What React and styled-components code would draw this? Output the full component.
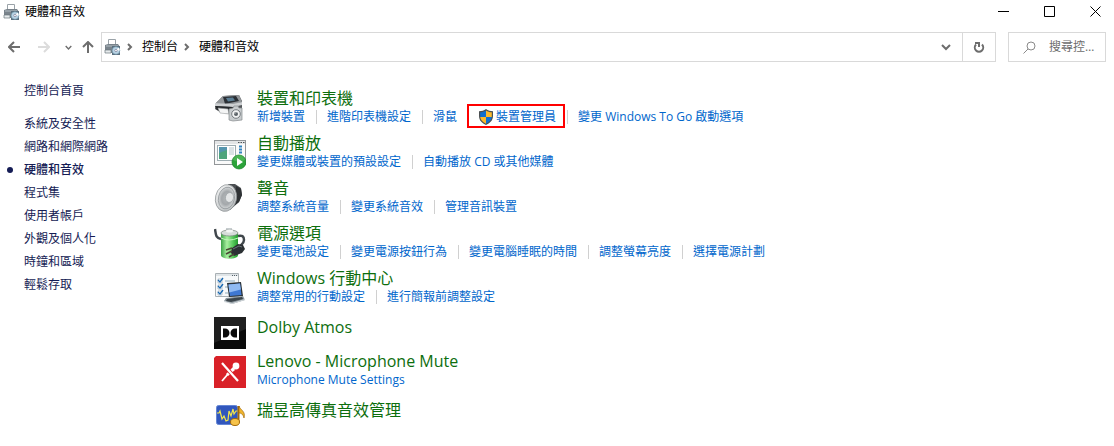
import React from 'react';
import styled, { createGlobalStyle, css } from 'styled-components';

const GlobalStyle = createGlobalStyle`
    * {
        box-sizing: border-box;
    }

    body {
        margin: 0;
        background: #fff;
        color: #000;
        font-family: 'Open Sans', 'Noto Sans CJK TC', sans-serif;
        font-size: 12px;
        line-height: 16px;
    }

    svg {
        display: block;
        flex: none;
    }
`;

const PlainButton = styled.button`
    display: flex;
    flex: none;
    align-items: center;
    justify-content: center;
    padding: 0;
    border: 0;
    background: none;
    color: inherit;
    font: inherit;
`;

const TitleBar = styled.header`
    display: flex;
    align-items: center;
    height: 24px;
    padding-left: 3px;
`;

const WindowTitle = styled.h1`
    flex: 1;
    margin: 0 0 0 5px;
    font-size: 12px;
    font-weight: 400;
`;

const WindowButtons = styled.div`
    display: flex;
    align-self: flex-start;
    gap: 8px;
`;

const WindowButton = styled(PlainButton)`
    width: 38px;
    height: 22px;
`;

const Toolbar = styled.div`
    display: flex;
    align-items: center;
    height: 30px;
    margin-top: 8px;
    padding: 0 8px 0 6px;
`;

const NavButtons = styled.nav`
    display: flex;
    width: 95px;
    color: #6d6d6d;
`;

const NavButton = styled(PlainButton)`
    width: ${({ $width }) => $width}px;
    height: 28px;

    &:last-child {
        padding-left: 4px;
    }

    &:disabled {
        color: #dcdcdc;
    }
`;

const AddressBar = styled.div`
    display: flex;
    flex: 1;
    align-items: center;
    height: 30px;
    padding-left: 2px;
    border: 1px solid #d9d9d9;
`;

const CrumbArrow = styled.span`
    margin: 0 8px 0 5px;
    color: #6d6d6d;
`;

const BarButton = styled(PlainButton)`
    width: 33px;
    height: 28px;
    margin-left: ${({ $push }) => ($push ? 'auto' : 0)};
    border-left: ${({ $divided }) => ($divided ? '1px solid #d9d9d9' : 0)};
    color: #6d6d6d;
`;

const SearchBox = styled.label`
    display: flex;
    align-items: center;
    width: 98px;
    height: 30px;
    margin-left: 12px;
    padding: 0 6px 0 14px;
    border: 1px solid #d9d9d9;
    color: #8a8a8a;
`;

const SearchInput = styled.input`
    flex: 1;
    min-width: 0;
    margin-left: 13px;
    padding: 0;
    border: 0;
    outline: 0;
    background: none;
    font: inherit;
    text-overflow: ellipsis;

    &::placeholder {
        color: #6d6d6d;
        opacity: 1;
    }
`;

const Content = styled.div`
    display: flex;
    padding: 17px 0 0 24px;
`;

const Sidebar = styled.nav`
    width: 190px;
`;

const SideList = styled.ul`
    margin: 10px 0 0;
    padding: 0;
    list-style: none;
`;

const SideLink = styled.a`
    position: relative;
    display: block;
    line-height: 23px;
    color: #151c55;
    text-decoration: none;

    ${({ $active }) =>
        $active &&
        css`
            font-weight: 500;

            &::before {
                content: '';
                position: absolute;
                top: 9px;
                left: -17px;
                width: 6px;
                height: 6px;
                border-radius: 50%;
                background: #151c55;
            }
        `}
`;

const Main = styled.main`
    flex: 1;
    padding-top: 9px;
`;

const Category = styled.section`
    display: flex;
    gap: 11px;
    margin-bottom: ${({ $single }) => ($single ? 2 : 8)}px;
    padding-top: ${({ $single }) => ($single ? 4 : 0)}px;
`;

const CategoryIcon = styled.div`
    width: 32px;
    height: 32px;
    margin-top: ${({ $single }) => ($single ? 0 : 5)}px;
`;

const CategoryTitle = styled.h2`
    margin: 0;
    font-size: 16px;
    font-weight: 400;
    line-height: 20px;

    a {
        color: #0d6e0d;
        text-decoration: none;
    }
`;

const TaskList = styled.ul`
    display: flex;
    margin: 1px 0 0;
    padding: 0;
    list-style: none;
`;

const Task = styled.li`
    display: flex;
    align-items: center;
    height: 16px;

    & + &::before {
        content: '';
        width: 1px;
        height: 14px;
        margin: 0 10px 0 11px;
        background: #d0d0d0;
    }
`;

const TaskLink = styled.a`
    display: flex;
    align-items: center;
    gap: 3px;
    color: #0066cc;
    white-space: nowrap;
    text-decoration: none;

    ${({ $marked }) =>
        $marked &&
        css`
            position: relative;

            &::after {
                content: '';
                position: absolute;
                inset: -5px -9px -3px -12px;
                border: 2px solid #f00;
            }
        `}
`;

const Stroke = ({ size, width = 2, children }) => (
    <svg
        width={size}
        height={size}
        viewBox={`0 0 ${size} ${size}`}
        fill="none"
        stroke="currentColor"
        strokeWidth={width}
    >
        {children}
    </svg>
);

const ChevronDown = ({ size = 10 }) => (
    <svg width={size} height={size} viewBox="0 0 10 10" fill="none" stroke="currentColor" strokeWidth="2">
        <path d="M1 3l4 4 4-4" />
    </svg>
);

const ChevronRight = () => (
    <Stroke size={8}>
        <path d="M2 1l3 3-3 3" />
    </Stroke>
);

const HardwareIcon = () => (
    <svg width="17" height="17" viewBox="0 0 17 17">
        <path d="M4.5.5h7v6h-7z" fill="#fff" stroke="#9aa2a8" />
        <path d="M1 6l3-1h10l2 3v6H3l-2-2z" fill="#79838b" />
        <path d="M2 7h12" stroke="#b4bdc3" />
        <path d="M1 11h6v3H1z" fill="#e7ebed" stroke="#6b757d" strokeWidth=".7" />
        <path d="M8 7h8v9H8z" fill="#5b6f7e" />
        <circle cx="12" cy="11.5" r="3.8" fill="#b9d3e4" stroke="#6b93a9" strokeWidth=".6" />
        <path d="M12 11.5l2.5-3a4 4 0 011.3 3z" fill="#fff" />
        <circle cx="12" cy="11.5" r="1.2" fill="#fff" stroke="#557" strokeWidth=".5" />
    </svg>
);

const ShieldIcon = () => (
    <svg width="14" height="16" viewBox="1 0 14 16">
        <path d="M8 0c2 1.6 4.3 2.2 7 2.2V7c0 4.5-3.2 7.3-7 9-3.8-1.7-7-4.5-7-9V2.2C3.7 2.2 6 1.6 8 0z" fill="#4b4f52" />
        <path d="M8 1.5V8H2.2V3.3C4.5 3.2 6.4 2.6 8 1.5z" fill="#0f6fd1" />
        <path d="M8 1.5V8h5.8V3.3C11.5 3.2 9.6 2.6 8 1.5z" fill="#fdb92c" />
        <path d="M2.2 8H8v6.7C5 13.2 2.6 11.2 2.2 8z" fill="#fdb92c" />
        <path d="M13.8 8H8v6.7c3-1.5 5.4-3.5 5.8-6.7z" fill="#0f6fd1" />
    </svg>
);

const PrinterIcon = () => (
    <svg width="32" height="32" viewBox="0 0 32 32">
        <path d="M2 10L9 3l16-1 3 6v9l-8 5-14-3-5-3z" fill="#54575a" />
        <path d="M2 10L9 3l16-1 3 7-9 3z" fill="#93979a" />
        <path d="M9 4l13-1 3 5-14 3z" fill="#2b3035" />
        <path d="M12 5l7-.5 2 3-7 1z" fill="#5c7f95" />
        <path d="M1 10l18 1 9-2v3l-9 2-18-1z" fill="#cdd0d2" />
        <path d="M1 13l18 1v4L3 17z" fill="#26292c" />
        <path d="M4 15l10 1 1 5-9-1z" fill="#f4f5f5" stroke="#9a9da0" strokeWidth=".6" />
        <path d="M15 16l4-1 1-2h4l1 2h3v12l-9 1-4-1z" fill="#c7cbcd" stroke="#858a8d" strokeWidth=".7" />
        <circle cx="22" cy="21" r="4.3" fill="#f2f3f3" stroke="#777d81" />
        <circle cx="22" cy="21" r="2" fill="#5b6267" />
        <path d="M21 20.5l1-1" stroke="#fff" />
    </svg>
);

const AutoPlayIcon = () => (
    <svg width="32" height="32" viewBox="0 0 32 32">
        <rect x=".5" y="2.5" width="31" height="24" fill="#fafafa" stroke="#929699" />
        <path d="M1 3h30v3H1z" fill="#e3e5e6" />
        <path d="M24 4.5h1.5m1 0H28m1 0h1.5" stroke="#4d5357" />
        <rect x="3.5" y="7.500" width="18" height="15" fill="#fff" stroke="#9faeb3" />
        <path d="M5 9h8v12H5z" fill="#5595ad" />
        <path d="M5 15l8-3v9H5z" fill="#4fa47c" />
        <path d="M15 10h5m-5 2h5m-5 2h5m-5 2h5" stroke="#b7c6cc" />
        <path d="M26.5 7.5v9" stroke="#3284c0" strokeWidth="3" strokeDasharray="2 1" />
        <circle cx="25" cy="24" r="7" fill="#2ca33a" stroke="#168127" strokeWidth=".7" />
        <path d="M19 22a6.2 6.2 0 0112 0q-6 3-12 0z" fill="#65c56a" opacity=".5" />
        <path d="M23 20l6 4-6 4z" fill="#fff" />
    </svg>
);

const SpeakerIcon = () => (
    <svg width="32" height="32" viewBox="0 0 32 32">
        <defs>
            <linearGradient id="rim" x1="0" y1="0" x2="1" y2="1">
                <stop stopColor="#f6f7f7" />
                <stop offset="1" stopColor="#b4b8ba" />
            </linearGradient>
            <radialGradient id="cone">
                <stop stopColor="#b5b9bb" />
                <stop offset=".6" stopColor="#a4a8ab" />
                <stop offset="1" stopColor="#d3d6d7" />
            </radialGradient>
        </defs>
        <path d="M14 1h7l6 4 1 7-3 7-9 8z" fill="#4c5053" />
        <path d="M22 3l5 3 1 6-3 7-4 3z" fill="#2f3235" />
        <ellipse cx="12" cy="15" rx="10.5" ry="13.5" transform="rotate(13 12 15)" fill="url(#rim)" stroke="#8b9093" strokeWidth=".7" />
        <ellipse cx="12.5" cy="15" rx="8" ry="11" transform="rotate(13 12.5 15)" fill="url(#cone)" stroke="#8a8f92" strokeWidth=".7" />
        <ellipse cx="15.5" cy="14.5" rx="4" ry="5" transform="rotate(13 15.5 14.5)" fill="#e3e5e6" stroke="#989da0" strokeWidth=".6" />
    </svg>
);

const PowerIcon = () => (
    <svg width="32" height="32" viewBox="0 0 32 32">
        <defs>
            <linearGradient id="cell">
                <stop stopColor="#3aa044" />
                <stop offset=".35" stopColor="#a9efa0" />
                <stop offset=".7" stopColor="#58c95c" />
                <stop offset="1" stopColor="#229a2c" />
            </linearGradient>
        </defs>
        <path d="M1 1c1 7 1 9 6 10m17-3c4-1 6 0 6 4 0 3-2 4-4 6" fill="none" stroke="#40474c" strokeWidth="2.5" />
        <path d="M12 0h6v4h-6z" fill="#c7cdcf" />
        <path d="M7 5v22c0 5 17 5 17 0V5z" fill="url(#cell)" />
        <ellipse cx="15.5" cy="5" rx="8.5" ry="3" fill="#d7ddda" stroke="#78837d" strokeWidth=".7" />
        <ellipse cx="15.5" cy="3" rx="3.5" ry="1.5" fill="#f4f6f5" />
        <path d="M7 10q8 4 17 0" fill="none" stroke="#c2f4ba" />
        <path d="M18 20l6-4 5 1 2 4-3 4-8 3-3-3z" fill="#2b3033" />
        <path d="M19 21l6-3 3 1" fill="none" stroke="#6b7479" />
        <path d="M18 20l-6 2m6 1l-6 3m8 0l-5 3" stroke="#4c4636" strokeWidth="1.6" />
    </svg>
);

const MobilityIcon = () => (
    <svg width="32" height="32" viewBox="0 0 32 32">
        <path d="M1.5.5h23v23h-23z" fill="#f7f9fa" stroke="#a9b0b4" />
        <path d="M2 1h22v2H2z" fill="#dfe4e7" />
        <path d="M18 2.5h1m1 0h1m1 0h1" stroke="#55616a" />
        <path d="M4 6h4v4H4zm0 6h4v4H4zm0 6h4v4H4z" fill="#fff" stroke="#9cadba" strokeWidth=".7" />
        <path d="M4 7l2 2 3-4M4 13l2 2 3-4M4 19l2 2 3-4" fill="none" stroke="#1768b2" strokeWidth="1.3" />
        <path d="M11 8h10M11 14h4M11 20h3" stroke="#8eabbe" />
        <path d="M13 10l14-1 2 14-14 1z" fill="#2b3339" />
        <path d="M14.5 11.5l11.5-1 1.5 11.5-11.5 1z" fill="#3f78d2" />
        <path d="M14.5 11.5l11.5-1 .8 6-11.5 3z" fill="#8fbaf3" />
        <path d="M12 25l17-2 2 4-13 4-8-3z" fill="#8b969d" />
        <path d="M13 26l15-2 1 2-12 3-5-1z" fill="#3b454b" />
        <path d="M10 28l8 2 13-4v1l-13 4-8-2z" fill="#d3d9dc" />
    </svg>
);

const DolbyIcon = () => (
    <svg width="32" height="32" viewBox="0 0 32 32">
        <path d="M0 0h32v32H0z" fill="#0a0a0a" />
        <path d="M0 0h32v12L0 26z" fill="#1f1f1f" />
        <path d="M7 9h18v14H7z" fill="#fff" />
        <path d="M9 11.5h2a4.5 4.5 0 010 9H9zM23 11.5h-2a4.5 4.5 0 000 9h2z" fill="#0b0b0b" />
    </svg>
);

const MicMuteIcon = () => (
    <svg width="32" height="32" viewBox="0 0 32 32">
        <path d="M2 0h30v32H0V2z" fill="#d92128" />
        <path d="M8 25l6-7" stroke="#fff" strokeWidth="1.8" />
        <path d="M12 18l7-7 2 3-7 6z" fill="#fff" />
        <circle cx="22" cy="10" r="3.4" fill="#fff" />
        <path d="M8 7l16 18" stroke="#d92128" strokeWidth="4" />
        <path d="M8 7l16 18" stroke="#fff" strokeWidth="2.2" />
    </svg>
);

const AudioManagerIcon = () => (
    <svg width="32" height="32" viewBox="0 0 32 32">
        <rect x="2.5" y="5.5" width="21" height="19" rx="2" fill="#3157bd" stroke="#6486d5" />
        <path d="M3 13h2l1-2 2 8 2-3 2 5 2-1 1-9 2 5 2-7 1 5 2-3h2" fill="none" stroke="#f3e64a" strokeWidth="1.2" />
        <path d="M24.5 6v16" stroke="#a26908" strokeWidth="2" />
        <path d="M25 6c1 4 7 5 5 12-1-4-3-5-5-5z" fill="#f0b52c" stroke="#a26908" strokeWidth=".7" />
        <ellipse cx="21" cy="22" rx="4.5" ry="3.5" fill="#f6c34a" stroke="#a26908" />
    </svg>
);

const sideLinks = ['系統及安全性', '網路和網際網路', '硬體和音效', '程式集', '使用者帳戶', '外觀及個人化', '時鐘和區域', '輕鬆存取'];

const categories = [
    {
        title: '裝置和印表機',
        Icon: PrinterIcon,
        tasks: ['新增裝置', '進階印表機設定', '滑鼠', { label: '裝置管理員', shield: true }, '變更 Windows To Go 啟動選項'],
    },
    { title: '自動播放', Icon: AutoPlayIcon, tasks: ['變更媒體或裝置的預設設定', '自動播放 CD 或其他媒體'] },
    { title: '聲音', Icon: SpeakerIcon, tasks: ['調整系統音量', '變更系統音效', '管理音訊裝置'] },
    {
        title: '電源選項',
        Icon: PowerIcon,
        tasks: ['變更電池設定', '變更電源按鈕行為', '變更電腦睡眠的時間', '調整螢幕亮度', '選擇電源計劃'],
    },
    { title: 'Windows 行動中心', Icon: MobilityIcon, tasks: ['調整常用的行動設定', '進行簡報前調整設定'] },
    { title: 'Dolby Atmos', Icon: DolbyIcon, tasks: [] },
    { title: 'Lenovo - Microphone Mute', Icon: MicMuteIcon, tasks: ['Microphone Mute Settings'] },
    { title: '瑞昱高傳真音效管理', Icon: AudioManagerIcon, tasks: [] },
];

const CategoryRow = ({ title, Icon, tasks }) => {
    const single = tasks.length === 0;

    return (
        <Category $single={single}>
            <CategoryIcon $single={single}>
                <Icon />
            </CategoryIcon>
            <div>
                <CategoryTitle>
                    <a href="#category">{title}</a>
                </CategoryTitle>
                {!single && (
                    <TaskList>
                        {tasks.map((task) => {
                            const label = task.label || task;

                            return (
                                <Task key={label}>
                                    <TaskLink href="#task" $marked={task.shield}>
                                        {task.shield && <ShieldIcon />}
                                        {label}
                                    </TaskLink>
                                </Task>
                            );
                        })}
                    </TaskList>
                )}
            </div>
        </Category>
    );
};

const App = () => (
    <>
        <GlobalStyle />
        <TitleBar>
            <HardwareIcon />
            <WindowTitle>硬體和音效</WindowTitle>
            <WindowButtons>
                <WindowButton aria-label="最小化">
                    <Stroke size={11} width={1}>
                        <path d="M0 5.5h11" />
                    </Stroke>
                </WindowButton>
                <WindowButton aria-label="最大化">
                    <Stroke size={11} width={1}>
                        <path d="M.5.5h10v10H.5z" />
                    </Stroke>
                </WindowButton>
                <WindowButton aria-label="關閉">
                    <Stroke size={11} width={1}>
                        <path d="M.5.5l10 10m0-10l-10 10" />
                    </Stroke>
                </WindowButton>
            </WindowButtons>
        </TitleBar>
        <Toolbar>
            <NavButtons>
                <NavButton $width={16} aria-label="上一頁">
                    <Stroke size={12}>
                        <path d="M12 6H1m5-5L1 6l5 5" />
                    </Stroke>
                </NavButton>
                <NavButton $width={44} aria-label="下一頁" disabled>
                    <Stroke size={12}>
                        <path d="M0 6h11M6 1l5 5-5 5" />
                    </Stroke>
                </NavButton>
                <NavButton $width={4} aria-label="最近的位置">
                    <ChevronDown size={7} />
                </NavButton>
                <NavButton $width={31} aria-label="上一層">
                    <Stroke size={12}>
                        <path d="M6 12V1M1 6l5-5 5 5" />
                    </Stroke>
                </NavButton>
            </NavButtons>
            <AddressBar>
                <HardwareIcon />
                <CrumbArrow>
                    <ChevronRight />
                </CrumbArrow>
                <PlainButton>控制台</PlainButton>
                <CrumbArrow>
                    <ChevronRight />
                </CrumbArrow>
                <PlainButton>硬體和音效</PlainButton>
                <BarButton aria-label="先前的位置" $push>
                    <ChevronDown />
                </BarButton>
                <BarButton aria-label="重新整理" $divided>
                    <Stroke size={12}>
                        <path d="M3 3.5a4.2 4.2 0 106 0M2 2h4v4" />
                    </Stroke>
                </BarButton>
            </AddressBar>
            <SearchBox>
                <Stroke size={13} width={1}>
                    <circle cx="8" cy="5" r="4" />
                    <path d="M5 8l-4.5 4.5" />
                </Stroke>
                <SearchInput aria-label="搜尋控制台" placeholder="搜尋控制台" />
            </SearchBox>
        </Toolbar>
        <Content>
            <Sidebar>
                <SideLink href="#home">控制台首頁</SideLink>
                <SideList>
                    {sideLinks.map((label) => (
                        <li key={label}>
                            <SideLink href="#section" $active={label === '硬體和音效'}>
                                {label}
                            </SideLink>
                        </li>
                    ))}
                </SideList>
            </Sidebar>
            <Main>
                {categories.map((category) => (
                    <CategoryRow key={category.title} {...category} />
                ))}
            </Main>
        </Content>
    </>
);

export default App;
